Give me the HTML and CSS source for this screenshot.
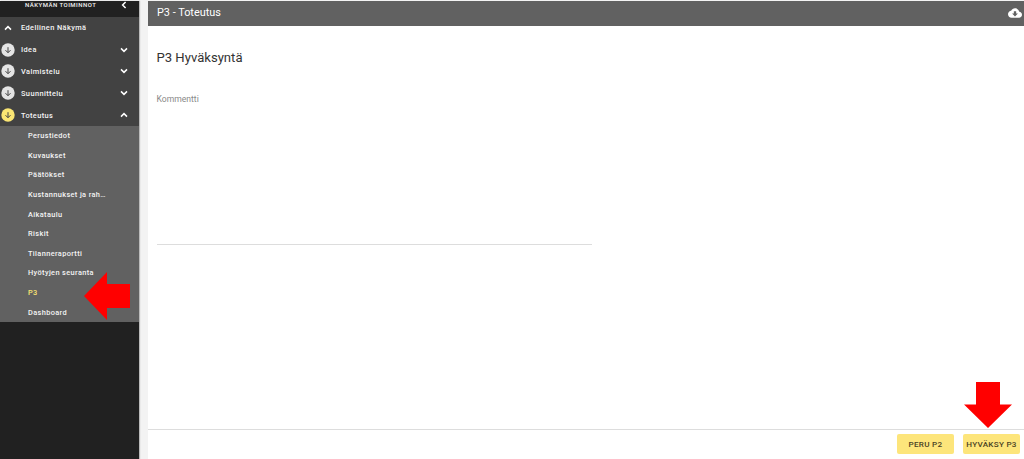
FILE: index.html
```html
<!DOCTYPE html>
<html lang="fi">
<head>
	<meta charset="UTF-8">
	<title>P3 - Toteutus</title>
	<link rel="stylesheet" href="styles.css">
</head>
<body>
	<svg class="defs">
		<symbol id="up" viewBox="0 0 8 6"><path d="M1 4.6 L4 1.6 L7 4.6"/></symbol>
		<symbol id="down" viewBox="0 0 8 6"><path d="M1 1.4 L4 4.4 L7 1.4"/></symbol>
		<symbol id="left" viewBox="0 0 6 8"><path d="M4.6 1 L1.6 4 L4.6 7"/></symbol>
		<symbol id="phase" viewBox="0 0 14 14"><circle cx="7" cy="7" r="6.7" stroke="none"/><path d="M7 4.2 V9.6 M4.5 7.2 L7 9.7 L9.5 7.2"/></symbol>
	</svg>
	<div class="page">
		<!-- sidebar -->
		<div class="sidebar">
			<div class="side-head">
				<span class="side-title">NÄKYMÄN TOIMINNOT</span>
				<svg class="chev-left"><use href="#left"/></svg>
			</div>
			<ul class="menu">
				<li class="back"><svg class="chev"><use href="#up"/></svg><span>Edellinen Näkymä</span></li>
				<li><svg class="phase"><use href="#phase"/></svg><span>Idea</span><svg class="chev"><use href="#down"/></svg></li>
				<li><svg class="phase"><use href="#phase"/></svg><span>Valmistelu</span><svg class="chev"><use href="#down"/></svg></li>
				<li><svg class="phase"><use href="#phase"/></svg><span>Suunnittelu</span><svg class="chev"><use href="#down"/></svg></li>
				<li><svg class="phase current"><use href="#phase"/></svg><span>Toteutus</span><svg class="chev"><use href="#up"/></svg></li>
			</ul>
			<ul class="submenu">
				<li>Perustiedot</li>
				<li>Kuvaukset</li>
				<li>Päätökset</li>
				<li>Kustannukset ja rah…</li>
				<li>Aikataulu</li>
				<li>Riskit</li>
				<li>Tilanneraportti</li>
				<li>Hyötyjen seuranta</li>
				<li class="active">P3</li>
				<li>Dashboard</li>
			</ul>
			<svg class="arrow arrow-left" viewBox="0 0 46 48"><path d="M0 24 L23 0 V12 H46 V36 H23 V48 Z"/></svg>
		</div>
		<!-- content -->
		<div class="main">
			<div class="topbar">
				<span>P3 - Toteutus</span>
				<svg class="cloud" viewBox="0 0 24 24"><path d="M19.35 10.04C18.67 6.59 15.64 4 12 4 9.11 4 6.6 5.64 5.35 8.04 2.34 8.36 0 10.91 0 14c0 3.31 2.69 6 6 6h13c2.76 0 5-2.24 5-5 0-2.64-2.05-4.78-4.65-4.96zM17 13l-5 5-5-5h3V9h4v4h3z"/></svg>
			</div>
			<div class="content">
				<h1>P3 Hyväksyntä</h1>
				<div class="comment">Kommentti</div>
			</div>
			<div class="footer">
				<button class="btn">PERU P2</button>
				<button class="btn">HYVÄKSY P3</button>
			</div>
			<svg class="arrow arrow-down" viewBox="0 0 48 46"><path d="M12 0 H36 V22.5 H48 L24 46 L0 22.5 H12 Z"/></svg>
		</div>
	</div>
</body>
</html>
```
FILE: styles.css
```css
*{
	margin:0;
	padding:0;
	box-sizing:border-box;
	list-style:none;
}
body{
	height:459px;
	overflow:hidden;
	background:#f3f3f3;
	font-family:Roboto,"Liberation Sans",sans-serif;
}
.defs{
	display:none;
}
.page{
	display:flex;
	height:459px;
	padding-top:1px;
}
/* sidebar */
.sidebar{
	position:relative;
	width:139px;
	background:#212121;
	color:#f4f4f4;
	box-shadow:1px 0 1px #bbb;
}
.side-head{
	display:flex;
	justify-content:space-between;
	height:16px;
	padding:0 12px 0 25px;
	overflow:hidden;
}
.side-title{
	font-size:6px;
	line-height:8px;
	font-weight:500;
	letter-spacing:.48px;
	white-space:nowrap;
}
.chev,.chev-left{
	width:8px;
	height:6px;
	fill:none;
	stroke:#fff;
	stroke-width:1.5;
}
.chev-left{
	width:6px;
	height:8px;
}
.menu{
	height:109px;
	background:#424242;
}
.menu li{
	display:flex;
	align-items:center;
	height:21.8px;
	padding:0 11px 0 1px;
	font-size:7.4px;
	font-weight:500;
	letter-spacing:.4px;
}
.menu span{
	flex:1;
	margin-left:6px;
}
.menu .back .chev{
	margin:0 3px 0 3px;
}
.phase{
	width:14px;
	height:14px;
	fill:#e4e4e4;
	stroke:#424242;
	stroke-width:1;
}
.current{
	fill:#fbe673;
}
.submenu{
	height:196px;
	background:#616161;
}
.submenu li{
	height:19.65px;
	padding-left:28px;
	font-size:7.4px;
	line-height:20.4px;
	font-weight:500;
	letter-spacing:.36px;
}
.submenu .active{
	color:#fbe673;
}
/* content */
.main{
	position:relative;
	display:flex;
	flex-direction:column;
	flex:1;
	margin-left:9px;
	background:#fff;
}
.topbar{
	display:flex;
	justify-content:space-between;
	align-items:center;
	height:25px;
	padding:0 2px 2px 9px;
	background:#616161;
	color:#fff;
	font-size:10.9px;
}
.cloud{
	width:14px;
	height:14px;
	fill:#fff;
}
.content{
	flex:1;
	padding:23px 9px 0 8.5px;
}
h1{
	color:#333;
	font-size:13.1px;
	line-height:18px;
	font-weight:400;
}
.comment{
	width:435px;
	height:152px;
	margin-top:26px;
	padding-top:1px;
	border-bottom:1px solid #ddd;
	color:#8a8a8a;
	font-size:8.6px;
	line-height:10px;
}
.footer{
	display:flex;
	justify-content:flex-end;
	gap:9px;
	height:30px;
	padding:4px 4px 0 0;
	border-top:1px solid #ddd;
}
.btn{
	width:57px;
	height:20px;
	border:0;
	border-radius:2px;
	background:#fde57b;
	color:#4a4224;
	font-family:inherit;
	font-size:8.1px;
	font-weight:500;
	letter-spacing:.28px;
	white-space:nowrap;
}
/* red pointers drawn over the page */
.arrow{
	position:absolute;
	fill:#f00;
}
.arrow-left{
	left:84px;
	top:271px;
	width:46px;
	height:48px;
}
.arrow-down{
	right:12px;
	top:381px;
	width:48px;
	height:46px;
}
```
